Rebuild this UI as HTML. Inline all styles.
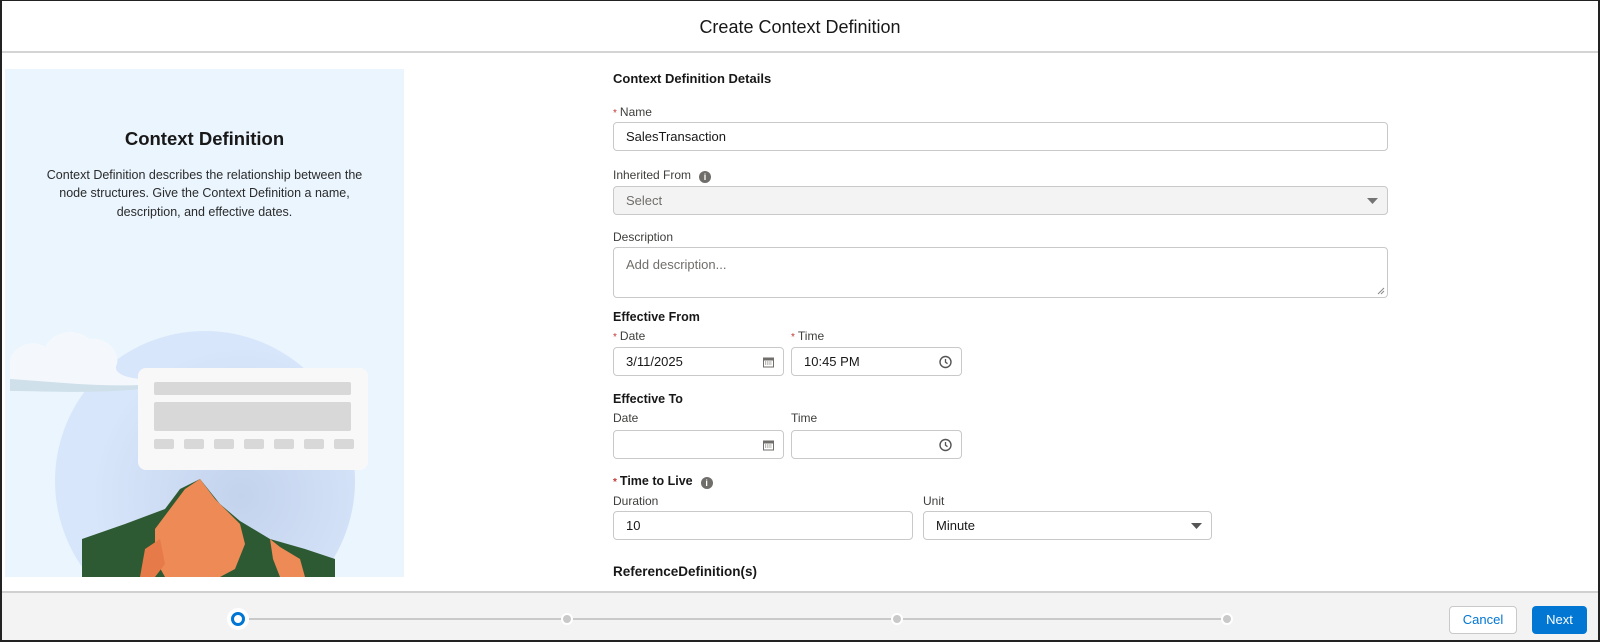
<!DOCTYPE html>
<html><head><meta charset="utf-8"><style>
*{box-sizing:border-box;margin:0;padding:0}
body{width:1600px;height:642px;overflow:hidden;background:#fff;font-family:"Liberation Sans",Arial,sans-serif;color:#181818;position:relative}
.abs{position:absolute}
.frame{position:absolute;left:0;top:0;width:1600px;height:642px;border:2px solid #222;border-top:1px solid #222;pointer-events:none;z-index:10}
.lbl{position:absolute;font-size:12px;color:#3e3e3c;white-space:nowrap}
.req{color:#c23934;font-size:10px;margin-right:3px}
.bold{position:absolute;font-size:12.5px;font-weight:bold;color:#181818;white-space:nowrap}
.inp{position:absolute;border:1px solid #c9c9c9;border-radius:4px;background:#fff;font-size:13px;color:#181818;padding-left:12px;display:flex;align-items:center}
.ic{position:absolute;right:9px;top:50%;transform:translateY(-50%)}
.info{display:inline-block;width:12px;height:12px;border-radius:50%;background:#706e6b;color:#fff;font-size:9px;font-weight:bold;text-align:center;line-height:12px;margin-left:8px;vertical-align:-1px}
</style></head><body>
<div class="frame"></div>
<div class="abs" style="left:0;top:0;width:1600px;height:53px;border-bottom:2px solid #d4d4d4;text-align:center;font-size:18px;line-height:55px;color:#181818">Create Context Definition</div>

<!-- left panel -->
<div class="abs" style="left:5px;top:69px;width:399px;height:508px;background:#eaf5fe;overflow:hidden">
  <svg class="abs" style="left:0;top:0" width="399" height="508">
    <defs><radialGradient id="g" cx="0.62" cy="0.55" r="0.5"><stop offset="0" stop-color="#c3d3ec"/><stop offset="1" stop-color="#d8e6fb"/></radialGradient></defs>
    <circle cx="200" cy="412" r="150" fill="url(#g)"/>
    <path d="M5 290 C10 275 30 270 40 278 C48 262 70 258 85 270 C100 268 115 280 112 295 C108 302 115 308 135 310 L135 318 C100 322 60 318 5 320 Z" fill="#f4f8fc"/>
    <path d="M5 310 C40 312 90 318 135 316 L135 320 C90 325 40 322 5 322 Z" fill="#cfe0ea"/>
    <rect x="133" y="299" width="230" height="102" rx="8" fill="#f8f8f8"/>
    <rect x="149" y="313" width="197" height="13" rx="2" fill="#d8d8d8"/>
    <rect x="149" y="333" width="197" height="29" rx="2" fill="#d8d8d8"/>
    <g fill="#d8d8d8"><rect x="149" y="370" width="20" height="10" rx="2"/><rect x="179" y="370" width="20" height="10" rx="2"/><rect x="209" y="370" width="20" height="10" rx="2"/><rect x="239" y="370" width="20" height="10" rx="2"/><rect x="269" y="370" width="20" height="10" rx="2"/><rect x="299" y="370" width="20" height="10" rx="2"/><rect x="329" y="370" width="20" height="10" rx="2"/></g>
    <path d="M77 470 L120 455 L160 440 L175 420 L195 410 L215 435 L235 452 L265 470 L300 480 L330 490 L330 508 L77 508 Z" fill="#2e5a33"/>
    <path d="M150 460 L165 440 L180 420 L195 410 L210 430 L235 455 L240 475 L230 500 L215 508 L160 508 L150 490 Z" fill="#ee8a56"/>
    <path d="M265 470 L275 478 L295 490 L300 508 L275 508 L268 490 Z" fill="#ee8a56"/>
    <path d="M140 480 L155 470 L160 495 L150 508 L135 508 Z" fill="#e67a48"/>
  </svg>
  <div class="abs" style="left:0;top:59px;width:399px;text-align:center;font-size:18.5px;font-weight:bold;color:#181818">Context Definition</div>
  <div class="abs" style="left:32px;top:97px;width:335px;text-align:center;font-size:12.5px;line-height:18.3px;color:#2b2b2b">Context Definition describes the relationship between the node structures. Give the Context Definition a name, description, and effective dates.</div>
</div>

<!-- form -->
<div class="bold" style="left:613px;top:71px;font-size:13px">Context Definition Details</div>
<div class="lbl" style="left:613px;top:105px"><span class="req">*</span>Name</div>
<div class="inp" style="left:613px;top:122px;width:775px;height:29px">SalesTransaction</div>
<div class="lbl" style="left:613px;top:168px">Inherited From<span class="info">i</span></div>
<div class="inp" style="left:613px;top:186px;width:775px;height:29px;background:#f3f3f3;color:#706e6b">Select<svg class="ic" style="right:8px" width="12" height="8"><path d="M0 1h11L5.5 7z" fill="#747474"/></svg></div>
<div class="lbl" style="left:613px;top:230px">Description</div>
<div class="inp" style="left:613px;top:247px;width:775px;height:51px;align-items:flex-start;padding-top:9px;color:#706e6b">Add description...<svg class="abs" style="right:2px;bottom:2px" width="8" height="8"><path d="M7 1L1 7M7 4L4 7" stroke="#888" stroke-width="1"/></svg></div>

<div class="bold" style="left:613px;top:310px">Effective From</div>
<div class="lbl" style="left:613px;top:329px"><span class="req">*</span>Date</div>
<div class="lbl" style="left:791px;top:329px"><span class="req">*</span>Time</div>
<div class="inp" style="left:613px;top:347px;width:171px;height:29px">3/11/2025<svg class="ic" width="11" height="11" viewBox="0 0 11 11"><rect x="0.5" y="1.5" width="10" height="9" fill="none" stroke="#706e6b"/><rect x="0.5" y="1.5" width="10" height="2.5" fill="#706e6b"/><path d="M2 5.5h7M2 7.5h7" stroke="#706e6b" stroke-dasharray="1.2 1"/></svg></div>
<div class="inp" style="left:791px;top:347px;width:171px;height:29px">10:45 PM<svg class="ic" width="13" height="13" viewBox="0 0 13 13"><circle cx="6.5" cy="6.5" r="5.5" fill="none" stroke="#555" stroke-width="1.4"/><path d="M6.5 3.5v3.2l2 1.5" fill="none" stroke="#555" stroke-width="1.3"/></svg></div>

<div class="bold" style="left:613px;top:392px">Effective To</div>
<div class="lbl" style="left:613px;top:411px">Date</div>
<div class="lbl" style="left:791px;top:411px">Time</div>
<div class="inp" style="left:613px;top:430px;width:171px;height:29px"><svg class="ic" width="11" height="11" viewBox="0 0 11 11"><rect x="0.5" y="1.5" width="10" height="9" fill="none" stroke="#706e6b"/><rect x="0.5" y="1.5" width="10" height="2.5" fill="#706e6b"/><path d="M2 5.5h7M2 7.5h7" stroke="#706e6b" stroke-dasharray="1.2 1"/></svg></div>
<div class="inp" style="left:791px;top:430px;width:171px;height:29px"><svg class="ic" width="13" height="13" viewBox="0 0 13 13"><circle cx="6.5" cy="6.5" r="5.5" fill="none" stroke="#555" stroke-width="1.4"/><path d="M6.5 3.5v3.2l2 1.5" fill="none" stroke="#555" stroke-width="1.3"/></svg></div>

<div class="bold" style="left:613px;top:474px"><span class="req">*</span>Time to Live<span class="info">i</span></div>
<div class="lbl" style="left:613px;top:494px">Duration</div>
<div class="lbl" style="left:923px;top:494px">Unit</div>
<div class="inp" style="left:613px;top:511px;width:300px;height:29px">10</div>
<div class="inp" style="left:923px;top:511px;width:289px;height:29px">Minute<svg class="ic" style="right:8px" width="12" height="8"><path d="M0 1h11L5.5 7z" fill="#555"/></svg></div>
<div class="bold" style="left:613px;top:564px;font-size:13.5px">ReferenceDefinition(s)</div>

<!-- footer -->
<div class="abs" style="left:0;top:591px;width:1600px;height:51px;background:#f3f3f3;border-top:2px solid #d0d0d0">
  <div class="abs" style="left:238px;top:25px;width:990px;height:2px;background:#c9c9c9"></div>
  <div class="abs" style="left:227px;top:15px;width:22px;height:22px;border-radius:50%;background:#fff"></div>
  <div class="abs" style="left:231px;top:19px;width:14px;height:14px;border-radius:50%;border:3px solid #0176d3;background:#fff"></div>
  <div class="abs" style="left:561px;top:20px;width:12px;height:12px;border-radius:50%;background:#c9c9c9;border:2px solid #fff"></div>
  <div class="abs" style="left:891px;top:20px;width:12px;height:12px;border-radius:50%;background:#c9c9c9;border:2px solid #fff"></div>
  <div class="abs" style="left:1221px;top:20px;width:12px;height:12px;border-radius:50%;background:#c9c9c9;border:2px solid #fff"></div>
  <div class="abs" style="left:1449px;top:13px;width:68px;height:28px;border:1px solid #c9c9c9;border-radius:4px;background:#fff;color:#0176d3;font-size:13px;text-align:center;line-height:26px">Cancel</div>
  <div class="abs" style="left:1532px;top:13px;width:55px;height:28px;border-radius:4px;background:#0176d3;color:#fff;font-size:13px;text-align:center;line-height:28px">Next</div>
</div>
</body></html>
